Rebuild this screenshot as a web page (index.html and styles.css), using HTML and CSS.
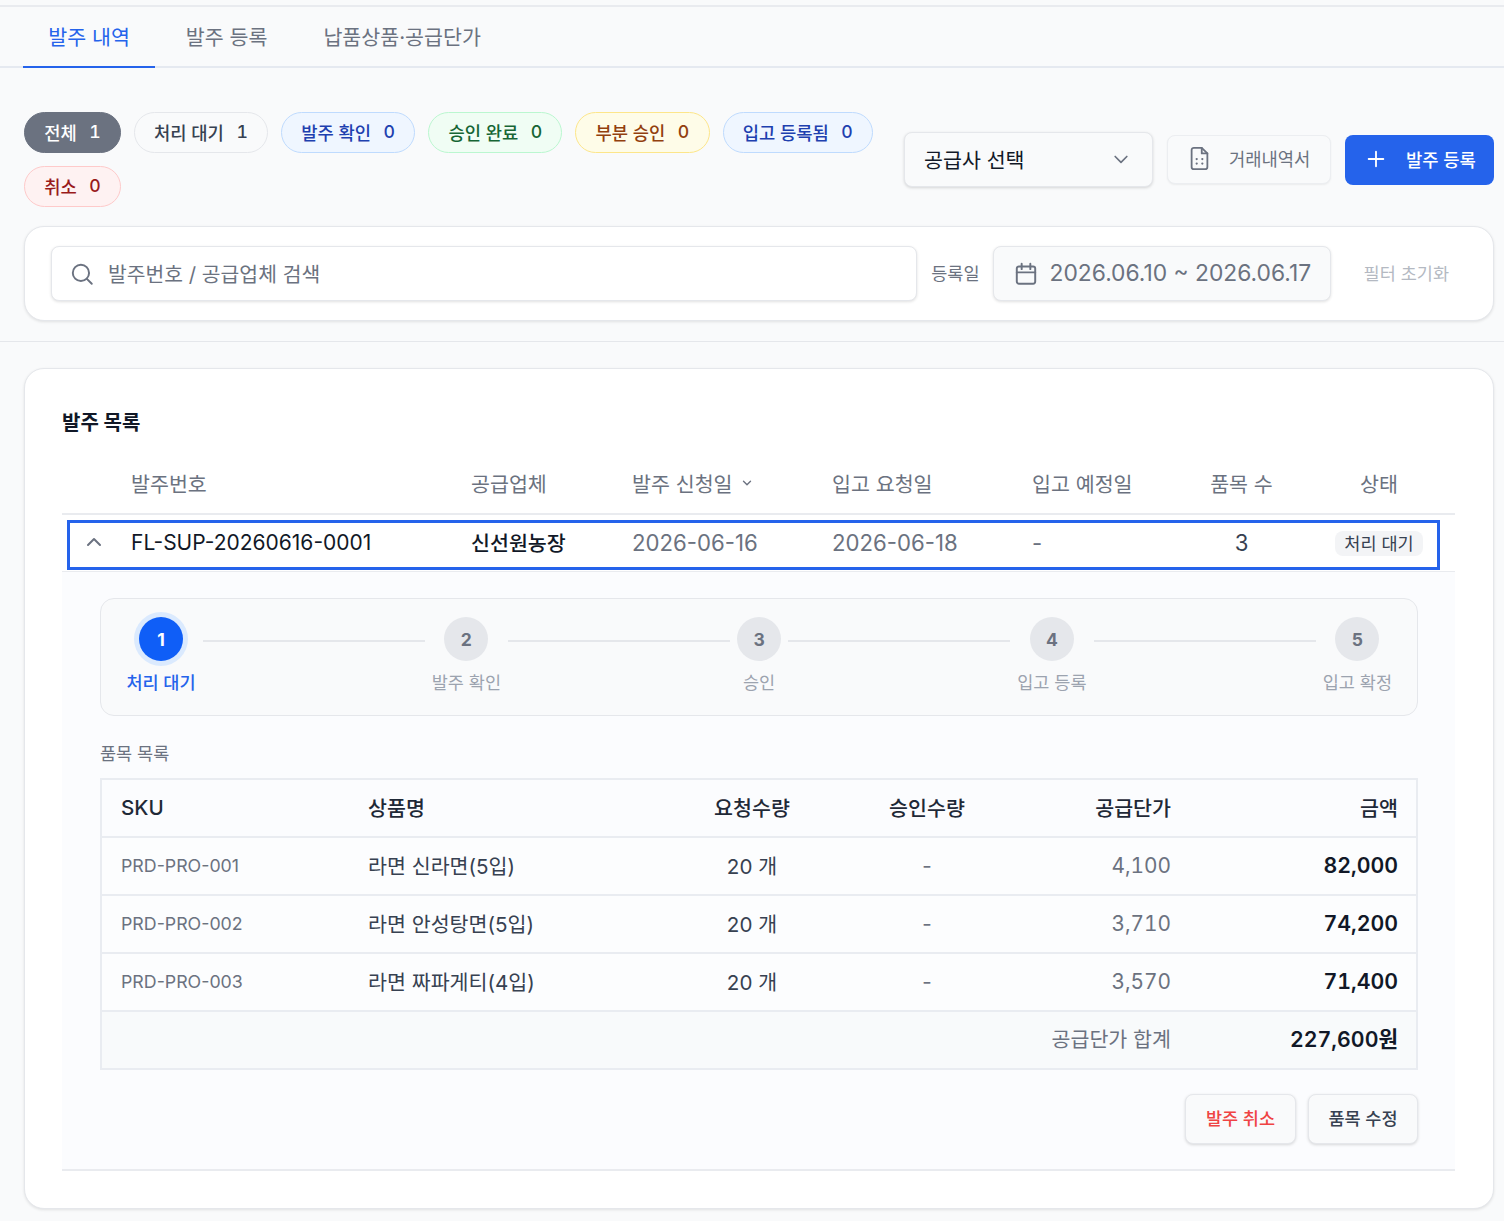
FILE: index.html
```html
<!DOCTYPE html>
<html lang="ko">
  <head>
    <meta charset="UTF-8" />
    <meta name="viewport" content="width=device-width, initial-scale=1.0" />
    <title>발주 내역</title>
    <link rel="stylesheet" href="styles.css">
  </head>
  <body>
    <nav class="tabs">
      <a class="tab active">발주 내역</a>
      <a class="tab">발주 등록</a>
      <a class="tab">납품상품·공급단가</a>
    </nav>

    <div class="page">
      <div class="toolbar">
        <div class="chips">
          <span class="chip chip-all">전체<b>1</b></span>
          <span class="chip chip-wait">처리 대기<b>1</b></span>
          <span class="chip chip-blue">발주 확인<b>0</b></span>
          <span class="chip chip-green">승인 완료<b>0</b></span>
          <span class="chip chip-yellow">부분 승인<b>0</b></span>
          <span class="chip chip-blue">입고 등록됨<b>0</b></span>
          <span class="chip chip-red">취소<b>0</b></span>
        </div>
        <div class="actions">
          <button class="select">
            공급사 선택
            <svg width="20" height="20" viewBox="0 0 24 24" fill="none" stroke="#6b7280" stroke-width="2" stroke-linecap="round" stroke-linejoin="round">
              <path d="M5 9l7 7 7-7" />
            </svg>
          </button>
          <button class="btn-statement">
            <svg width="27" height="27" viewBox="0 0 24 24" fill="none" stroke="#6b7280" stroke-width="1.6" stroke-linecap="round" stroke-linejoin="round">
              <path d="M14 2.5H7a2 2 0 0 0-2 2v15a2 2 0 0 0 2 2h10a2 2 0 0 0 2-2V7.5z" />
              <path d="M14 2.5v5h5" />
              <path d="M9.5 12.5h.01M14.5 12.5h.01M9.5 16.5h.01M14.5 16.5h.01" stroke-width="2" />
            </svg>
            거래내역서
          </button>
          <button class="btn-primary">
            <svg width="22" height="22" viewBox="0 0 24 24" fill="none" stroke="#fff" stroke-width="2" stroke-linecap="round">
              <path d="M12 4v16M4 12h16" />
            </svg>
            발주 등록
          </button>
        </div>
      </div>

      <div class="filter-card">
        <div class="search">
          <svg width="26" height="26" viewBox="0 0 24 24" fill="none" stroke="#6b7280" stroke-width="1.8" stroke-linecap="round">
            <circle cx="11" cy="11" r="7.5" />
            <path d="M16.5 16.5L21 21" />
          </svg>
          <span>발주번호 / 공급업체 검색</span>
        </div>
        <span class="filter-label">등록일</span>
        <div class="date-range">
          <svg width="26" height="26" viewBox="0 0 24 24" fill="none" stroke="#6b7280" stroke-width="1.8" stroke-linecap="round" stroke-linejoin="round">
            <rect x="3.5" y="5" width="17" height="16" rx="2" />
            <path d="M8 2.5v5M16 2.5v5M3.5 10.5h17" />
          </svg>
          <span>2026.06.10 ~ 2026.06.17</span>
        </div>
        <span class="filter-reset">필터 초기화</span>
      </div>
    </div>

    <hr class="divider" />

    <div class="page">
      <section class="list-card">
        <h2>발주 목록</h2>

        <div class="order-head">
          <span></span>
          <span>발주번호</span>
          <span>공급업체</span>
          <span class="sortable">
            발주 신청일
            <svg width="14" height="14" viewBox="0 0 24 24" fill="none" stroke="#6b7280" stroke-width="2.4" stroke-linecap="round" stroke-linejoin="round">
              <path d="M6 9l6 6 6-6" />
            </svg>
          </span>
          <span>입고 요청일</span>
          <span>입고 예정일</span>
          <span class="center">품목 수</span>
          <span class="center">상태</span>
        </div>

        <div class="order-row">
          <span class="toggle">
            <svg width="24" height="24" viewBox="0 0 24 24" fill="none" stroke="#6b7280" stroke-width="2" stroke-linecap="round" stroke-linejoin="round">
              <path d="M6 15l6-6 6 6" />
            </svg>
          </span>
          <span class="order-no">FL-SUP-20260616-0001</span>
          <span class="supplier">신선원농장</span>
          <span class="muted">2026-06-16</span>
          <span class="muted">2026-06-18</span>
          <span class="muted">-</span>
          <span class="center order-count">3</span>
          <span class="center"><span class="status">처리 대기</span></span>
          <div class="highlight"></div>
        </div>

        <div class="order-detail">
          <div class="stepper">
            <div class="step current"><i>1</i><span>처리 대기</span></div>
            <div class="step-line"></div>
            <div class="step"><i>2</i><span>발주 확인</span></div>
            <div class="step-line"></div>
            <div class="step"><i>3</i><span>승인</span></div>
            <div class="step-line"></div>
            <div class="step"><i>4</i><span>입고 등록</span></div>
            <div class="step-line"></div>
            <div class="step"><i>5</i><span>입고 확정</span></div>
          </div>

          <h3>품목 목록</h3>

          <table class="items">
            <colgroup>
              <col class="col-sku" />
              <col class="col-name" />
              <col class="col-qty" />
              <col class="col-qty" />
              <col class="col-qty" />
              <col />
            </colgroup>
            <thead>
              <tr>
                <th>SKU</th>
                <th>상품명</th>
                <th class="center">요청수량</th>
                <th class="center">승인수량</th>
                <th class="right">공급단가</th>
                <th class="right">금액</th>
              </tr>
            </thead>
            <tbody>
              <tr>
                <td class="sku">PRD-PRO-001</td>
                <td>라면 신라면(5입)</td>
                <td class="center">20 개</td>
                <td class="center dash">-</td>
                <td class="right price">4,100</td>
                <td class="right amount">82,000</td>
              </tr>
              <tr>
                <td class="sku">PRD-PRO-002</td>
                <td>라면 안성탕면(5입)</td>
                <td class="center">20 개</td>
                <td class="center dash">-</td>
                <td class="right price">3,710</td>
                <td class="right amount">74,200</td>
              </tr>
              <tr>
                <td class="sku">PRD-PRO-003</td>
                <td>라면 짜파게티(4입)</td>
                <td class="center">20 개</td>
                <td class="center dash">-</td>
                <td class="right price">3,570</td>
                <td class="right amount">71,400</td>
              </tr>
            </tbody>
            <tfoot>
              <tr>
                <td colspan="5" class="right total-label">공급단가 합계</td>
                <td class="right amount">227,600원</td>
              </tr>
            </tfoot>
          </table>

          <div class="detail-actions">
            <button class="btn-small btn-danger">발주 취소</button>
            <button class="btn-small">품목 수정</button>
          </div>
        </div>
      </section>
    </div>
  </body>
</html>
```

FILE: styles.css
```css
* {
  margin: 0;
  padding: 0;
  box-sizing: border-box;
  font-family: Inter, "Noto Sans CJK KR", sans-serif;
}

body {
  background-color: #f9fafb;
  color: #111827;
  padding-top: 5px;
  height: 1221px;
  overflow: hidden;
}

button {
  cursor: pointer;
  border: none;
}

.center {
  text-align: center;
}

.right {
  text-align: right;
}

/* tabs */
.tabs {
  display: flex;
  height: 63px;
  padding-left: 23px;
  border-top: 2px solid #e9ebef;
  border-bottom: 2px solid #e5e9f0;
  gap: 5.5px;
}

.tab {
  padding: 0 25.25px;
  line-height: 62px;
  height: 61px;
  font-size: 20.6px;
  color: #6b7280;
}

.tab.active {
  color: #2563eb;
  border-bottom: 2px solid #2563eb;
}

.page {
  padding: 0 10px 0 24px;
}

/* status chips and buttons */
.toolbar {
  display: flex;
  align-items: center;
  padding-top: 44px;
}

.chips {
  flex: 1;
  display: flex;
  flex-wrap: wrap;
  gap: 13px;
}

.chip {
  display: flex;
  align-items: center;
  gap: 12.5px;
  height: 41px;
  padding: 0 19.2px 2px;
  border: 1.5px solid #e5e7eb;
  border-radius: 21px;
  font-size: 17.7px;
  font-weight: 500;
}

.chip b {
  font-weight: 500;
  font-variant-numeric: tabular-nums;
}

.chip-all {
  background: #6b7280;
  border-color: #6b7280;
  color: #fff;
}

.chip-wait {
  background: #f9fafb;
  color: #374151;
}

.chip-blue {
  background: #eff6ff;
  border-color: #bfdbfe;
  color: #1e40af;
}

.chip-green {
  background: #f0fdf4;
  border-color: #bbf7d0;
  color: #166534;
}

.chip-yellow {
  background: #fefce8;
  border-color: #fde68a;
  color: #92400e;
}

.chip-red {
  background: #fef2f2;
  border-color: #fecaca;
  color: #991b1b;
}

.actions {
  display: flex;
  align-items: center;
  gap: 14px;
}

.select {
  display: flex;
  align-items: center;
  justify-content: space-between;
  width: 249px;
  height: 55px;
  padding: 0 21px 2px 19px;
  background: #f9fafb;
  border: 1px solid #e5e7eb;
  border-radius: 8px;
  box-shadow: 0 1px 3px rgba(0, 0, 0, 0.15);
  font-size: 20.6px;
  color: #111827;
}

.btn-statement {
  display: flex;
  align-items: center;
  gap: 16px;
  width: 164px;
  height: 49px;
  padding: 0 0 3px 18px;
  background: #f9fafb;
  border: 1px solid #eceef1;
  border-radius: 8px;
  box-shadow: 0 1px 2px rgba(0, 0, 0, 0.06);
  font-size: 17.7px;
  color: #6b7280;
}

.btn-primary {
  display: flex;
  align-items: center;
  gap: 19px;
  width: 149px;
  height: 50px;
  padding: 0 0 2px 20px;
  background: #2563eb;
  border-radius: 8px;
  font-size: 17.7px;
  font-weight: 500;
  color: #fff;
}

/* filter */
.filter-card {
  display: flex;
  align-items: center;
  height: 95px;
  margin-top: 19px;
  padding: 0 44px 0 26px;
  background: #fff;
  border: 1px solid #e5e7eb;
  border-radius: 20px;
  box-shadow: 0 1px 3px rgba(0, 0, 0, 0.1);
}

.search {
  flex: 1;
  display: flex;
  align-items: center;
  gap: 13px;
  height: 55px;
  padding-left: 17px;
  background: #fff;
  border: 1px solid #e5e7eb;
  border-radius: 8px;
  box-shadow: 0 1px 3px rgba(0, 0, 0, 0.12);
  font-size: 20.4px;
  color: #6b7280;
}

.search span,
.date-range span {
  padding-bottom: 2px;
}

.filter-label {
  margin: 0 13px 2px 14px;
  font-size: 17.5px;
  color: #6b7280;
}

.date-range {
  display: flex;
  align-items: center;
  gap: 11px;
  width: 338px;
  height: 55px;
  padding-left: 19px;
  background: #f9fafb;
  border: 1px solid #e5e7eb;
  border-radius: 8px;
  box-shadow: 0 1px 3px rgba(0, 0, 0, 0.12);
  font-size: 22.8px;
  color: #6b7280;
}

.filter-reset {
  margin: 0 0 2px 33px;
  font-size: 17.5px;
  color: #b4b9c2;
}

.divider {
  margin: 20px 0 26px;
  border: none;
  border-top: 1px solid #e5e7eb;
}

/* order list */
.list-card {
  height: 841px;
  padding: 0 38px 0 37px;
  background: #fff;
  border: 1px solid #e5e7eb;
  border-radius: 20px;
  box-shadow: 0 1px 3px rgba(0, 0, 0, 0.1);
}

h2 {
  padding-top: 39px;
  height: 91px;
  font-size: 20px;
  font-weight: 700;
  line-height: 30px;
}

.order-head,
.order-row {
  display: grid;
  grid-template-columns: 69px 340px 161px 200px 200px 148px 123px 152px;
  align-items: center;
}

.order-head {
  height: 55px;
  padding-bottom: 8px;
  border-bottom: 2px solid #e9ebef;
  font-size: 20.6px;
  color: #6b7280;
}

.sortable {
  display: flex;
  align-items: center;
  gap: 7px;
}

.order-row {
  position: relative;
  height: 57px;
  padding-bottom: 2px;
  font-size: 22.2px;
  border-bottom: 1px solid #e9ebef;
}

.toggle {
  display: flex;
  justify-content: center;
  padding-right: 5px;
}

.order-no {
  font-size: 21px;
}

.supplier {
  font-size: 20.6px;
  font-weight: 500;
}

.muted {
  color: #6b7280;
}

.order-count {
  color: #374151;
}

.status {
  display: inline-block;
  padding: 0 9px;
  line-height: 25px;
  background: #f3f4f6;
  border-radius: 8px;
  font-size: 17.5px;
  color: #374151;
}

/* annotation frame drawn over the row */
.highlight {
  position: absolute;
  left: 5px;
  right: 15px;
  top: 5px;
  bottom: 1px;
  border: 3px solid #2563eb;
}

.order-detail {
  height: 599px;
  padding: 26px 37px 0 38px;
  background: #fbfcfe;
  border-bottom: 2px solid #e9ebef;
}

.stepper {
  display: flex;
  height: 118px;
  padding: 18px 25px 0 25.5px;
  background: #f9fafb;
  border: 1px solid #e5e7eb;
  border-radius: 14px;
}

.step {
  display: flex;
  flex-direction: column;
  align-items: center;
  gap: 7px;
  font-size: 17.5px;
  color: #9ca3af;
}

.step span {
  white-space: nowrap;
  line-height: 30px;
}

.step i {
  display: flex;
  justify-content: center;
  align-items: center;
  width: 44px;
  height: 44px;
  border-radius: 50%;
  background: #e5e7eb;
  font-style: normal;
  font-size: 17.5px;
  font-weight: 700;
  color: #6b7280;
}

.step.current {
  color: #2563eb;
  font-weight: 500;
}

.step.current i {
  background: #0f5ef7;
  color: #fff;
  box-shadow: 0 0 0 5px #dbeafe;
}

.step-line {
  flex: 1;
  height: 2px;
  margin: 23px 7px 0;
  background: #e5e7eb;
}

h3 {
  height: 62px;
  padding-top: 24px;
  font-size: 17.5px;
  font-weight: 400;
  line-height: 28px;
  color: #6b7280;
}

.items {
  width: 100%;
  table-layout: fixed;
  border-collapse: collapse;
  border: 2px solid #e9ecf1;
  background: #fcfdfe;
}

.col-sku {
  width: 248px;
}

.col-name {
  width: 315px;
}

.col-qty {
  width: 175px;
}

.items th,
.items td {
  height: 58px;
  padding: 0 18px 2px 19px;
  border-bottom: 2px solid #e9ecf1;
  font-size: 20.6px;
  text-align: left;
  color: #374151;
}

.items th {
  font-weight: 500;
  color: #1f2937;
  background: #fbfcfe;
}

.items .center {
  text-align: center;
}

.items .right {
  text-align: right;
}

.items .sku {
  font-size: 17.8px;
  color: #6b7280;
}

.items .dash,
.items .price {
  color: #6b7280;
  font-size: 20.8px;
  font-variant-numeric: tabular-nums;
}

.items .amount {
  font-size: 21.3px;
  font-weight: 600;
  color: #111827;
  font-variant-numeric: tabular-nums;
}

.items tfoot td {
  padding-bottom: 5px;
  background: #f8fafb;
  border-bottom: none;
}

.items .total-label {
  color: #6b7280;
}

.detail-actions {
  display: flex;
  justify-content: flex-end;
  gap: 12px;
  margin-top: 24px;
}

.btn-small {
  height: 50px;
  width: 110px;
  padding-bottom: 3px;
  background: #f9fafb;
  border: 1px solid #e5e7eb;
  border-radius: 8px;
  box-shadow: 0 1px 3px rgba(0, 0, 0, 0.15);
  font-size: 17.5px;
  font-weight: 500;
  color: #374151;
}

.btn-danger {
  width: 111px;
  color: #ef4444;
}
```
